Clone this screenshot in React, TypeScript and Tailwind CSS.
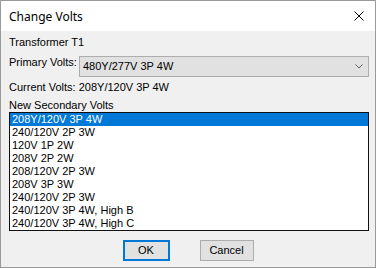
import React from "react";

const items = [
  "208Y/120V 3P 4W",
  "240/120V 2P 3W",
  "120V 1P 2W",
  "208V 2P 2W",
  "208/120V 2P 3W",
  "208V 3P 3W",
  "240/120V 2P 3W",
  "240/120V 3P 4W, High B",
  "240/120V 3P 4W, High C",
];

export default function App() {
  const sans = { fontFamily: '"Liberation Sans", Arial, sans-serif' };
  return (
    <div className="w-[376px] h-[268px] border border-[#9a9a9a] bg-[#f0f0f0] flex flex-col text-[11px] leading-[13px] text-black" style={sans}>
      <div className="h-[30px] bg-white flex items-center justify-between pl-[8px] pr-[10px] shrink-0">
        <span className="text-[12px] mt-[1px]" style={{ fontFamily: '"Segoe UI", "Noto Sans", sans-serif' }}>Change Volts</span>
        <svg width="10" height="10" viewBox="0 0 10 10" className="mr-[1px]">
          <path d="M0.5 0.5 L9.5 9.5 M9.5 0.5 L0.5 9.5" stroke="#000" strokeWidth="1" />
        </svg>
      </div>
      <div className="flex flex-col pl-[8px] pr-[6px]">
        <div className="mt-[5px] h-[13px]">Transformer T1</div>
        <div className="mt-[7px] flex items-start">
          <div className="w-[70px] h-[13px]">Primary Volts:</div>
          <div className="w-[290px] h-[21px] bg-[#e1e1e1] border border-[#adadad] flex items-center justify-between pl-[3px] pr-[5px]">
            <span>480Y/277V 3P 4W</span>
            <svg width="8" height="5" viewBox="0 0 8 5">
              <path d="M0.5 0.5 L4 4 L7.5 0.5" fill="none" stroke="#606060" strokeWidth="1" />
            </svg>
          </div>
        </div>
        <div className="mt-[4px] h-[13px]">Current Volts: 208Y/120V 3P 4W</div>
        <div className="mt-[5px] h-[13px]">New Secondary Volts</div>
        <div className="w-[360px] h-[119px] border border-[#101010] bg-white flex flex-col">
          {items.map((t, i) => (
            <div
              key={i}
              className={
                i === 0
                  ? "h-[13px] pl-[2px] bg-[#0078d7] text-white whitespace-nowrap"
                  : "h-[13px] pl-[2px] whitespace-nowrap"
              }
            >
              {t}
            </div>
          ))}
        </div>
        <div className="mt-[9px] flex justify-center gap-[30px] pr-[2px]">
          <div className="w-[47px] h-[21px] border-2 border-[#0078d7] bg-[#e1e1e1] flex items-center justify-center">OK</div>
          <div className="w-[54px] h-[21px] border border-[#adadad] bg-[#e1e1e1] flex items-center justify-center">Cancel</div>
        </div>
      </div>
    </div>
  );
}
